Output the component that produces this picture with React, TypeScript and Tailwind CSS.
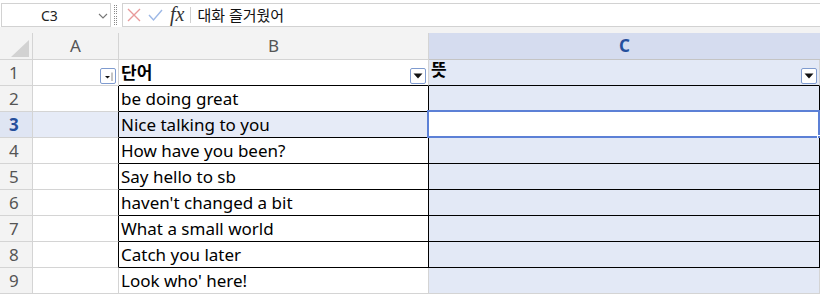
import React from "react";

const FONT = '"Noto Sans", "Noto Sans CJK KR", sans-serif';

const words = [
  "be doing great",
  "Nice talking to you",
  "How have you been?",
  "Say hello to sb",
  "haven't changed a bit",
  "What a small world",
  "Catch you later",
  "Look who' here!",
];

function FilterBtn({ small }: { small?: boolean }) {
  return (
    <div className="absolute right-[2px] bottom-[1px] w-[16px] h-[16px] border border-solid border-[#7f9bcf] bg-white rounded-[2px] flex items-center justify-center">
      {small ? (
        <svg width="12" height="12" viewBox="0 0 12 12">
          <path d="M3 6 L8 6 L5.5 8.5 Z" fill="#111" />
          <path d="M10 2.5 L10 11" stroke="#8a8a8a" strokeWidth="1" />
        </svg>
      ) : (
        <svg width="12" height="12" viewBox="0 0 12 12">
          <path d="M1.5 3.5 L10.5 3.5 L6 8.5 Z" fill="#111" />
        </svg>
      )}
    </div>
  );
}

export default function App() {
  return (
    <div className="w-[820px] h-[294px] bg-white overflow-hidden relative" style={{ fontFamily: FONT }}>
      {/* Formula bar */}
      <div className="h-[27px] flex items-start pt-[3px] bg-white">
        <div className="ml-[1px] w-[110px] h-[24px] border border-solid border-[#d2d2d2] bg-white flex items-center relative">
          <span className="absolute left-[39px] top-[1px] text-[14px] text-[#222]">C3</span>
          <svg className="absolute right-[2px] top-[8px]" width="10" height="8" viewBox="0 0 10 8">
            <path d="M1 2 L5 6 L9 2" stroke="#777" strokeWidth="1.1" fill="none" />
          </svg>
        </div>
        <div className="ml-[3px] mt-[2px] w-[4px] h-[20px] flex flex-col justify-between">
          {Array.from({ length: 10 }).map((_, i) => (
            <div key={i} className="flex gap-[1px]">
              <div className="w-[1px] h-[1px] bg-[#888]" />
              <div className="w-[1px] h-[1px] bg-[#888]" />
            </div>
          ))}
        </div>
        <div className="ml-[4px] flex-1 h-[24px] border border-solid border-[#d2d2d2] border-r-0 bg-white flex items-center">
          <svg className="ml-[4px]" width="14" height="14" viewBox="0 0 14 14">
            <path d="M1 1 L13 13 M13 1 L1 13" stroke="#e89a9a" strokeWidth="1.4" />
          </svg>
          <svg className="ml-[7px]" width="15" height="14" viewBox="0 0 15 14">
            <path d="M1 7 L5.5 12 L14 2" stroke="#9db8e6" strokeWidth="1.4" fill="none" />
          </svg>
          <span className="ml-[7px] text-[20px] leading-none italic text-[#333] -mt-[3px]" style={{ fontFamily: '"Liberation Serif", serif' }}>
            fx
          </span>
          <div className="ml-[6px] w-px h-[16px] bg-[#d0d0d0]" />
          <span className="ml-[6px] text-[15px] text-[#111]">대화 즐거웠어</span>
        </div>
      </div>

      {/* Column header */}
      <div className="h-[33px] bg-[#f3f3f3] pt-[6px]">
        <div className="grid grid-cols-[33px_86px_310px_1fr] h-[27px]">
          <div className="border-solid border-r-[1px] border-b-[1px] border-[#d4d4d4] relative">
            <svg className="absolute left-[11px] top-[7px]" width="18" height="17" viewBox="0 0 18 17">
              <path d="M18 0 L18 17 L0 17 Z" fill="#d2d2d2" />
            </svg>
          </div>
          <div className="border-solid border-r-[1px] border-b-[1px] border-[#d4d4d4] flex items-center justify-center text-[17px] text-[#555]">A</div>
          <div className="border-solid border-r-[1px] border-b-[1px] border-[#d4d4d4] flex items-center justify-center text-[17px] text-[#555]">B</div>
          <div className="bg-[#d5dcef] border-solid border-b-[1px] border-[#c4c4c4] flex items-center justify-center text-[17px] font-bold text-[#254f9c]">C</div>
        </div>
      </div>

      {/* Rows */}
      <div>
        {Array.from({ length: 9 }).map((_, r) => {
          const row = r + 1;
          const isSel = row === 3;
          const inTable = row >= 2 && row <= 8;
          const headerRow = row === 1;
          const blackBottom = row <= 8;
          const hdrCls = isSel
            ? "bg-[#dfe5f3] font-bold text-[#254f9c]"
            : "bg-[#f3f3f3] text-[#555]";
          const aRight = inTable ? "border-r-black" : "border-r-[#d4d4d4]";
          const bcBottom = blackBottom ? "border-b-black" : "border-b-[#d4d4d4]";
          const bcRight = inTable ? "border-r-black" : "border-r-[#d4d4d4]";
          return (
            <div key={row} className="grid grid-cols-[33px_86px_310px_1fr] h-[26px] overflow-visible">
              <div
                className={`border-solid border-r-[1px] border-b-[1px] border-r-[#d4d4d4] border-b-[#d4d4d4] pl-[9px] flex items-center text-[17px] leading-[20px] ${hdrCls}`}
              >
                {row}
              </div>
              <div
                className={`border-solid border-r-[1px] border-b-[1px] border-b-[#d4d4d4] relative ${aRight} ${
                  isSel ? "bg-[#e6ebf7]" : "bg-white"
                }`}
              >
                {headerRow && <FilterBtn small />}
              </div>
              <div
                className={`border-solid border-r-[1px] border-b-[1px] relative pl-[2px] flex items-end pb-[1px] text-[17px] leading-[22px] text-black ${bcBottom} ${bcRight} ${
                  isSel ? "bg-[#e6ebf7]" : "bg-white"
                }`}
              >
                {headerRow ? <span className="font-bold">단어</span> : words[r - 1]}
                {headerRow && <FilterBtn />}
              </div>
              <div
                className={`border-solid border-r-[1px] border-b-[1px] relative pl-[2px] flex items-start text-[17px] leading-[20px] text-black ${bcBottom} ${bcRight} ${
                  isSel ? "bg-white" : "bg-[#e3e9f6]"
                }`}
              >
                {headerRow && <span className="font-bold">뜻</span>}
                {headerRow && <FilterBtn />}
                {isSel && (
                  <>
                    <div className="absolute -left-[2px] -top-[2px] -right-[1px] -bottom-[1px] border-2 border-solid border-[#5c80d6]" />
                    <div className="absolute -right-[3px] -bottom-[3px] w-[5px] h-[5px] bg-[#5c80d6] border border-solid border-white" />
                  </>
                )}
              </div>
            </div>
          );
        })}
      </div>
    </div>
  );
}
